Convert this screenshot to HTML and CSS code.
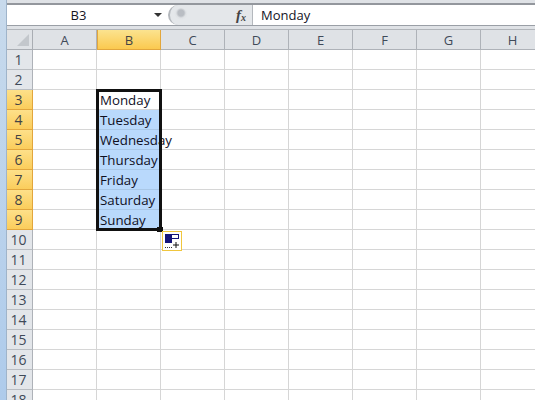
FILE: index.html
```html
<!DOCTYPE html>
<html lang="en">
<head>
  <meta charset="UTF-8" />
  <title>Excel - Days of the week</title>
  <link rel="stylesheet" href="styles.css">
</head>
<body>
  <div class="window">
    <div class="frame"></div>
    <div class="main">
      <div class="formula-bar">
        <div class="name-box">
          <span class="name-text">B3</span>
          <span class="name-arrow"></span>
        </div>
        <div class="fx-area">
          <span class="fx-knob"></span>
          <span class="fx">f<sub>x</sub></span>
        </div>
        <div class="formula-input">Monday</div>
      </div>

      <div class="col-headers">
        <div class="corner"><span class="corner-mark"></span></div>
        <div class="col-head">A</div>
        <div class="col-head active">B</div>
        <div class="col-head">C</div>
        <div class="col-head">D</div>
        <div class="col-head">E</div>
        <div class="col-head">F</div>
        <div class="col-head">G</div>
        <div class="col-head">H</div>
      </div>

      <div class="sheet">
        <div class="row-headers">
          <div class="row-head">1</div>
          <div class="row-head">2</div>
          <div class="row-head active">3</div>
          <div class="row-head active">4</div>
          <div class="row-head active">5</div>
          <div class="row-head active">6</div>
          <div class="row-head active">7</div>
          <div class="row-head active">8</div>
          <div class="row-head active">9</div>
          <div class="row-head">10</div>
          <div class="row-head">11</div>
          <div class="row-head">12</div>
          <div class="row-head">13</div>
          <div class="row-head">14</div>
          <div class="row-head">15</div>
          <div class="row-head">16</div>
          <div class="row-head">17</div>
          <div class="row-head">18</div>
        </div>
        <div class="cells">
          <div class="cell r3">Monday</div>
          <div class="cell fill r4">Tuesday</div>
          <div class="cell fill r5">Wednesday</div>
          <div class="cell fill r6">Thursday</div>
          <div class="cell fill r7">Friday</div>
          <div class="cell fill r8">Saturday</div>
          <div class="cell fill r9">Sunday</div>
          <div class="selection">
            <span class="fill-handle"></span>
            <span class="paste-options">
              <svg width="14" height="15" viewBox="0 0 14 15">
                <rect x="0" y="0" width="7" height="9" fill="#14147a"/>
                <rect x="0.5" y="0.5" width="13" height="4" fill="none" stroke="#14147a"/>
                <rect x="0" y="4" width="13" height="1" fill="#14147a"/>
                <path d="M0 13.5h1M2 13.5h1M4 13.5h1M6 13.5h1" stroke="#333"/>
                <path d="M11 8v6M8 11h6" stroke="#111" stroke-width="1"/>
              </svg>
            </span>
          </div>
        </div>
      </div>
    </div>
  </div>
</body>
</html>
```

FILE: styles.css
```css
html, body {
  margin: 0;
  padding: 0;
  height: 400px;
  overflow: hidden;
  background: #fff;
}

body {
  font-family: "Open Sans", "Noto Sans", sans-serif;
  font-size: 13px;
  color: #14141f;
}

.window {
  display: flex;
  width: 535px;
  height: 400px;
  overflow: hidden;
}

.frame {
  flex: 0 0 7px;
  box-sizing: border-box;
  background: linear-gradient(#c8daec, #aecbeb);
  border-right: 1px solid #9fb4ca;
}

.main {
  flex: 1;
  min-width: 0;
  display: flex;
  flex-direction: column;
  background: #dfe2e6;
}

/* formula bar */
.formula-bar {
  display: flex;
  flex: none;
  height: 20px;
  margin-top: 3px;
  margin-bottom: 3px;
  background: #fff;
  border-top: 2px solid #93979d;
  border-bottom: 1px solid #9a9fa6;
}

.name-box {
  flex: 0 0 161px;
  display: flex;
  align-items: center;
}

.name-text {
  flex: 1;
  text-align: center;
  padding-right: 4px;
}

.name-arrow {
  width: 0;
  height: 0;
  margin-right: 6px;
  border-left: 4px solid transparent;
  border-right: 4px solid transparent;
  border-top: 4px solid #333;
}

.fx-area {
  flex: 0 0 85px;
  display: flex;
  align-items: center;
  justify-content: space-between;
  box-sizing: border-box;
  height: 20px;
  padding: 0 6px 0 4px;
  background: #e4e7ea;
  border: 1px solid #b4b8bd;
  border-width: 0 1px 0 2px;
  border-radius: 11px 0 0 11px;
}

.fx-knob {
  width: 14px;
  height: 14px;
  border-radius: 50%;
  background: radial-gradient(circle at 7px 5px, #b9bdc3 0 3px, #dfe2e5 5px, #e4e7ea 7px);
}

.fx {
  font-family: "Liberation Serif", serif;
  font-style: italic;
  font-weight: bold;
  font-size: 15px;
  line-height: 16px;
  color: #444;
}

.fx sub {
  font-size: 10px;
  line-height: 0;
  vertical-align: -1px;
}

.formula-input {
  flex: 1;
  padding-left: 8px;
  line-height: 20px;
}

/* headers */
.col-headers {
  display: flex;
  flex: none;
  height: 20px;
  border-top: 1px solid #b1b5ba;
}

.corner {
  flex: 0 0 26px;
  box-sizing: border-box;
  position: relative;
  background: #dfe2e6;
  border-right: 1px solid #a9adb3;
  border-bottom: 1px solid #a9adb3;
}

.corner-mark {
  position: absolute;
  right: 3px;
  bottom: 3px;
  width: 0;
  height: 0;
  border-left: 12px solid transparent;
  border-bottom: 12px solid #c3c7cc;
}

.col-head {
  flex: 0 0 64px;
  box-sizing: border-box;
  text-align: center;
  line-height: 20px;
  color: #3f4a59;
  background: #dfe2e6;
  border-right: 1px solid #aeb2b8;
  border-bottom: 1px solid #aeb2b8;
}

.col-head.active {
  background: linear-gradient(#fbe38f, #fbc94f);
  border: 1px solid #e2a63c;
  border-top: none;
  color: #444;
}

.sheet {
  display: flex;
  flex: 1;
  min-height: 0;
  background: #fff;
}

.row-headers {
  flex: 0 0 26px;
}

.row-head {
  height: 20px;
  box-sizing: border-box;
  padding-right: 2px;
  text-align: center;
  font-size: 14px;
  line-height: 20px;
  color: #3f4a59;
  background: #e3e6ea;
  border-right: 1px solid #aeb2b8;
  border-bottom: 1px solid #b9bdc2;
}

.row-head.active {
  background: linear-gradient(#fde08a, #fbcd5b);
  border-right-color: #e2a63c;
  border-bottom-color: #e2a63c;
  color: #444;
}

/* cells */
.cells {
  flex: 1;
  position: relative;
  display: grid;
  grid-template-columns: repeat(8, 64px);
  grid-auto-rows: 20px;
  background-color: #fff;
  background-image:
    linear-gradient(to right, transparent 63px, #d6d6d6 63px),
    linear-gradient(to bottom, transparent 19px, #d6d6d6 19px);
  background-size: 64px 20px;
}

.cell {
  grid-column: 2;
  padding-left: 3px;
  font-size: 13.3px;
  line-height: 20px;
  white-space: nowrap;
  color: #10101f;
}

.cell.fill {
  background: #b9d9fc;
  border-bottom: 1px solid #a9c7e6;
  box-sizing: border-box;
}

.r3 { grid-row: 3; }
.r4 { grid-row: 4; }
.r5 { grid-row: 5; }
.r6 { grid-row: 6; }
.r7 { grid-row: 7; }
.r8 { grid-row: 8; }
.r9 { grid-row: 9; }

.selection {
  grid-column: 2;
  grid-row: 3 / 10;
  margin: -1px;
  border: 3px solid #111;
  position: relative;
  pointer-events: none;
}

.fill-handle {
  position: absolute;
  right: -4px;
  bottom: -4px;
  width: 6px;
  height: 5px;
  background: #111;
}

.paste-options {
  position: absolute;
  left: 63px;
  top: 139px;
  width: 20px;
  height: 20px;
  box-sizing: border-box;
  padding: 2px 0 0 2px;
  background: #fff;
  border: 1px solid #f0c63e;
}
```
